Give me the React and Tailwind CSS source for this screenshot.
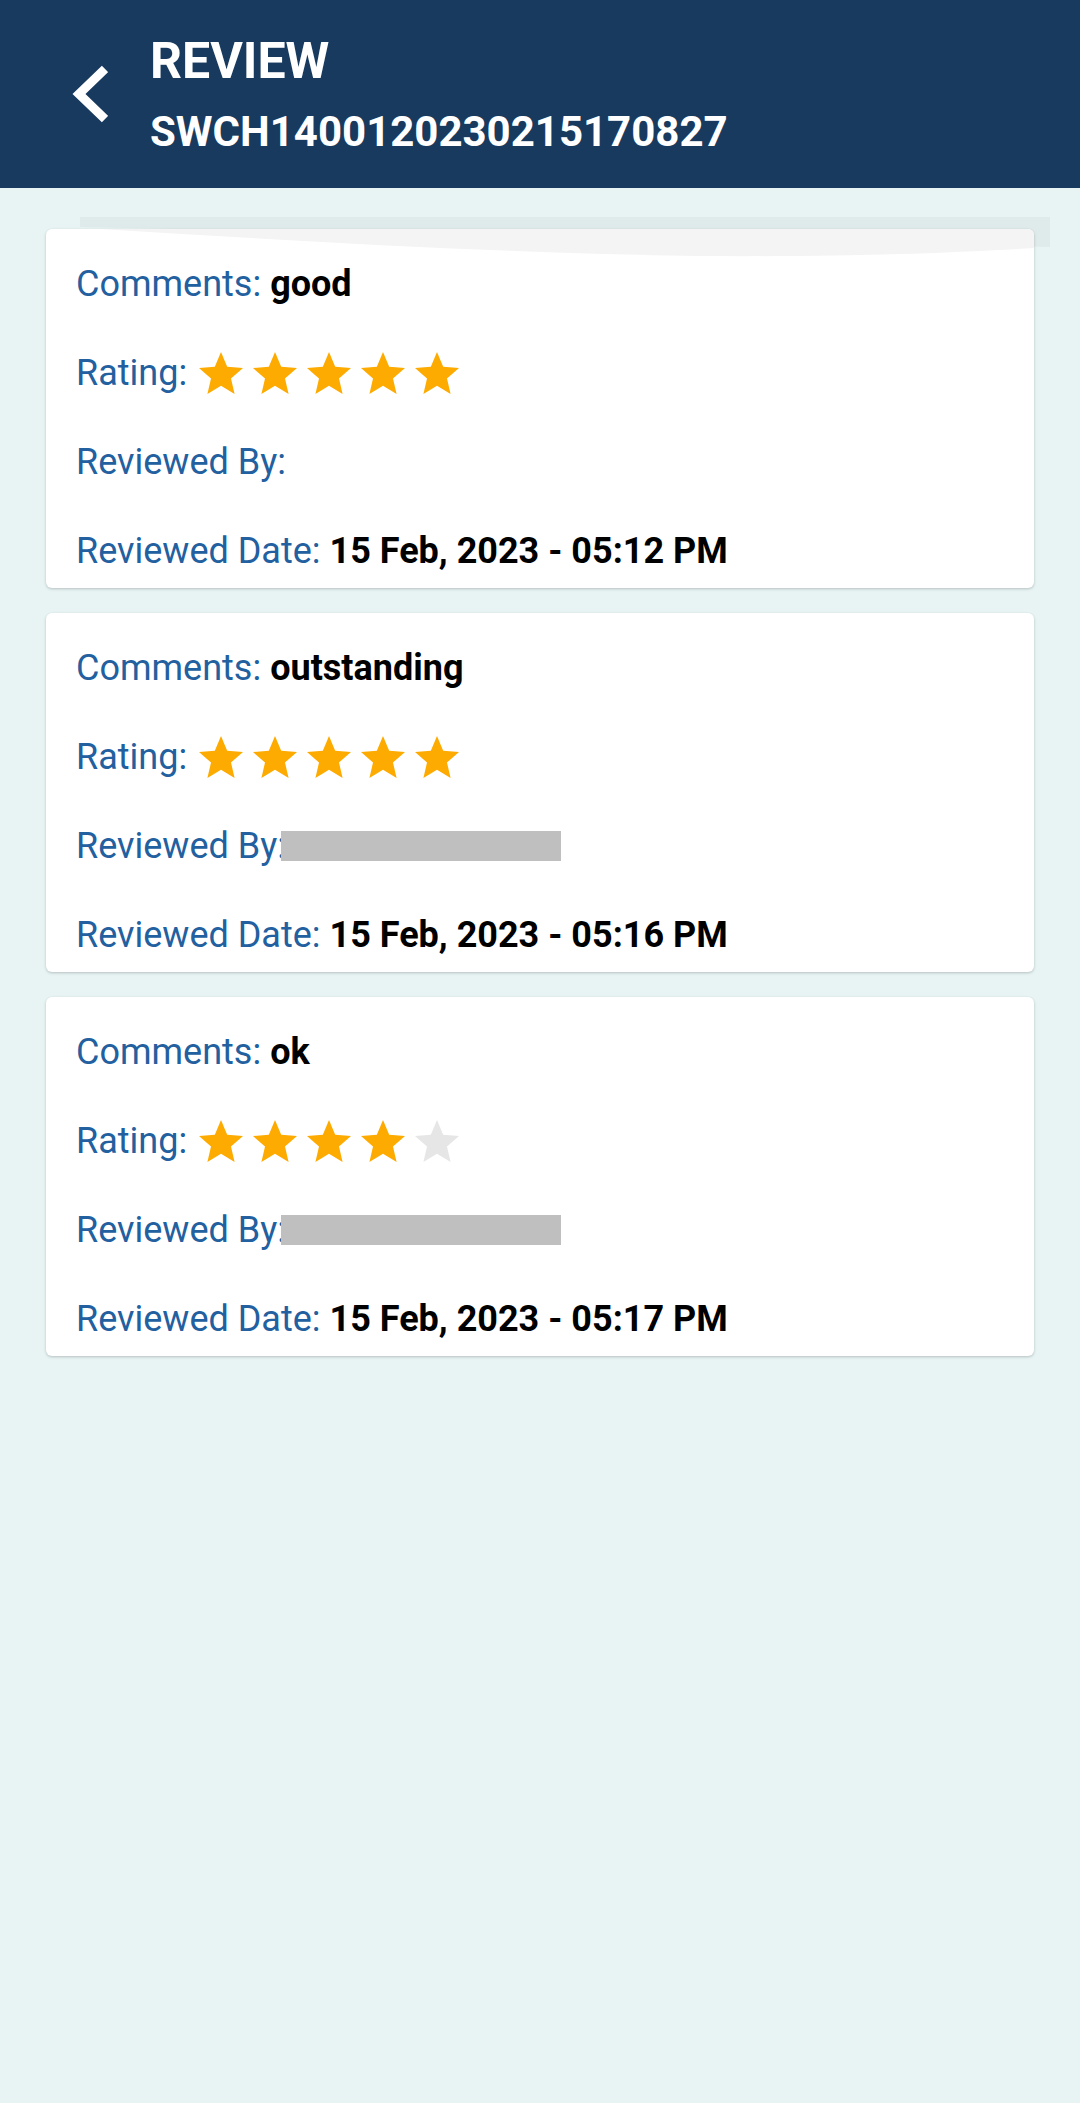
import { Fragment } from 'react';

const reviews = [
  { comment: 'good', rating: 5, reviewer: false, date: '15 Feb, 2023 - 05:12 PM' },
  { comment: 'outstanding', rating: 5, reviewer: true, date: '15 Feb, 2023 - 05:16 PM' },
  { comment: 'ok', rating: 4, reviewer: true, date: '15 Feb, 2023 - 05:17 PM' },
];

function Star({ filled }) {
  return (
    <svg viewBox="2 2 20 19" className="w-[44px] h-[42px]">
      <path
        d="M12 17.27L18.18 21l-1.64-7.03L22 9.24l-7.19-.61L12 2 9.19 8.63 2 9.24l5.46 4.73L5.82 21z"
        fill={filled ? '#fdab00' : '#e6e6e6'}
      />
    </svg>
  );
}

function Row({ label, children }) {
  return (
    <div className="h-[50px] flex items-center whitespace-nowrap">
      <span className="text-[#22609f]">{label}</span>
      {children}
    </div>
  );
}

function ReviewCard({ review, first }) {
  return (
    <div className="relative">
      {first && (
        // stacked-sheet band peeking out above the first card
        <svg className="absolute left-[34px] top-[-12px] w-[970px] h-[40px]" viewBox="0 0 970 40">
          <polygon points="0,0 970,0 970,30 0,10" fill="#dfeaea" />
        </svg>
      )}
      <div className="relative bg-white rounded-[6px] overflow-hidden shadow-[0_1px_3px_rgba(0,0,0,0.22)]">
        {first && (
          <svg className="absolute top-0 left-0 w-[988px] h-[30px]" viewBox="0 0 988 30">
            <path d="M54 0 C250 12 450 24 654 27 C800 28 900 24 988 19 L988 0 Z" fill="#f4f4f4" />
          </svg>
        )}
        <div className="relative flex flex-col pt-[30px] pb-[12px] pl-[30px] gap-[39px] text-[36px]">
          <Row label="Comments:">
            <span className="ml-[9px] font-bold text-black">{review.comment}</span>
          </Row>
          <Row label="Rating:">
            <div className="ml-[12px] flex gap-[10px]">
              {[1, 2, 3, 4, 5].map((n) => (
                <Star key={n} filled={n <= review.rating} />
              ))}
            </div>
          </Row>
          <Row label="Reviewed By:">
            {review.reviewer && <div className="-ml-[5px] w-[280px] h-[30px] bg-[#bfbfbf]" />}
          </Row>
          <Row label="Reviewed Date:">
            <span className="ml-[9px] font-bold text-black">{review.date}</span>
          </Row>
        </div>
      </div>
    </div>
  );
}

export default function App() {
  return (
    <div className="min-h-screen bg-[#e8f4f4] font-['Roboto',sans-serif]">
      <header className="h-[188px] bg-[#183a5e] flex items-start pl-[68px] pt-[36px] text-white">
        <svg viewBox="0 0 40 60" className="w-[40px] h-[60px] mt-[28px]">
          <polyline points="37,5 11,30 37,55" fill="none" stroke="white" strokeWidth="9" />
        </svg>
        <div className="ml-[42px] flex flex-col font-bold leading-none">
          <span className="text-[50px]">REVIEW</span>
          <span className="text-[42px] mt-[25px]">SWCH1400120230215170827</span>
        </div>
      </header>

      <main className="px-[46px] pt-[41px] flex flex-col gap-[25px]">
        {reviews.map((r, i) => (
          <Fragment key={i}>
            <ReviewCard review={r} first={i === 0} />
          </Fragment>
        ))}
      </main>
    </div>
  );
}
